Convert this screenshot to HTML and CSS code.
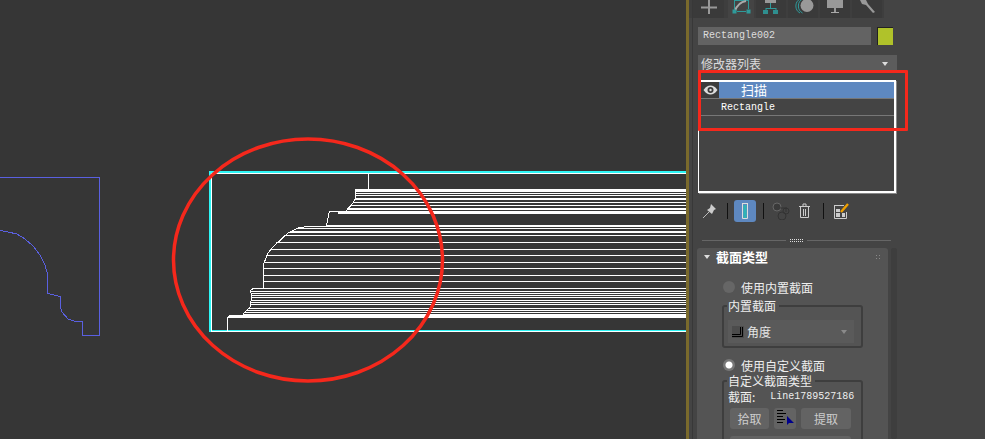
FILE: index.html
```html
<!DOCTYPE html>
<html lang="zh-CN">
<head>
  <meta charset="UTF-8">
  <title>扫描修改器</title>
  <link rel="stylesheet" href="styles.css">
</head>
<body>
  <div class="app">
    <div class="viewport">
      <svg class="scene" width="686" height="439" viewBox="0 0 686 439">
        <!-- profile shape -->
        <path class="profile" d="M0 177.5H99.5V335.5H82.5V321.5L77 322L68 319L62 312L60 305V296.5L52 294.5L47.5 293.5V274L45 265L40 255L33 246L25 239L17 234L8 232L0 230.5"/>
        <!-- sweep result -->
        <path class="cyan" d="M209 171.5H686M209 172.5H686M209.5 171V332M210.5 171V332M209 330.5H686"/>
        <path class="white" d="M211 173.5H686M211.5 173V332M211 331.5H686"/>
        <path class="white" d="M368.5 173V189
          M355 189.5H686M355 190.5H686M355 191.5H686M355 193.5H686M355 195.5H686M355 198.5H686M355 199.5H686
          M353 202.5H686M351 205.5H686M348 208.5H686M348 209.5H686
          M329 211.5H686M338 212.5H686M338 213.5H686
          M355.5 189V198L353 203L346 211M329.5 211L326.5 225
          M326 225.5H686M310 226.5H686M298 228.5H686M290 231.5H686M289 232.5H686M284 235.5H686
          M276 242.5H686M271 249.5H686M267 255.5H686M264 262.5H686M263 268.5H686M263 275.5H686M263 281.5H686
          M253 288.5H686M250 291.5H686M251 293.5H686M251 295.5H686M252 297.5H686M251 300.5H686M251 302.5H686M250 304.5H686
          M249 308.5H686M247 310.5H686M245 312.5H686M243 314.5H686M229 315.5H686M228 316.5H686M228 317.5H686
          M310 226L298 228L288 233L273 247L268 253L264 263L263.5 268V288.5
          M253 288.5L250 291L252 295L250 307L243 314
          M227.5 317V331"/>
        <ellipse class="mark" cx="308" cy="260" rx="134.5" ry="121"/>
      </svg>
    </div>

    <div class="panel">
      <div class="tabs">
        <div class="tab">
          <svg width="18" height="14" viewBox="0 0 18 14"><path class="gr" d="M1 7.5H17M9 0V14"/></svg>
        </div>
        <div class="tab tab-on">
          <svg width="20" height="15" viewBox="0 0 20 15">
            <path class="te" d="M3.5 0V9M3.5 .5H18M17.5 .5V9"/>
            <path class="gr2" d="M4 11C6 5 9 2 15 1"/>
            <path class="te" d="M6 11.5H15"/>
            <rect class="ts" x="1.5" y="9.5" width="4" height="4"/><rect class="ts" x="15.5" y="9.5" width="4" height="4"/>
          </svg>
        </div>
        <div class="tab">
          <svg width="16" height="15" viewBox="0 0 16 15">
            <rect x="2" y="0" width="11" height="3" fill="#999"/>
            <path class="te" d="M7.5 3V8M3 8.5H13M3 8V11M13 8V11"/>
            <rect x="0" y="10" width="5" height="4" fill="#2f8f8f"/><rect x="10" y="10" width="5" height="4" fill="#2f8f8f"/>
          </svg>
        </div>
        <div class="tab tab-motion">
          <svg width="20" height="14" viewBox="0 0 20 14">
            <path class="te" d="M5 -1A8 8 0 0 0 5 13M7.5 -1A8 8 0 0 0 7.5 13"/>
            <circle cx="12" cy="5.5" r="6.5" fill="#999"/>
          </svg>
        </div>
        <div class="tab">
          <svg width="16" height="15" viewBox="0 0 16 15">
            <rect x="0" y="0" width="16" height="8" fill="#999"/>
            <rect x="7" y="8" width="2" height="4" fill="#999"/><rect x="4" y="12" width="8" height="1" fill="#aaa"/>
          </svg>
        </div>
        <div class="tab">
          <svg width="17" height="15" viewBox="0 0 17 15">
            <path d="M4 0L1 0L3 4L7 5L14 13L16 12L9 4L7 0Z" fill="#999"/>
          </svg>
        </div>
      </div>

      <div class="name-row">
        <div class="name-field">Rectangle002</div>
        <div class="swatch"></div>
      </div>

      <div class="mod-select">
        <span>修改器列表</span>
        <i class="caret caret-light"></i>
      </div>

      <div class="stack">
        <div class="stack-row row-sel">
          <div class="eye">
            <svg width="15" height="10" viewBox="0 0 15 10">
              <path d="M.5 5C3 1.5 5 .5 7.5 .5S12 1.5 14.5 5C12 8.5 10 9.5 7.5 9.5S3 8.5 .5 5Z" fill="#ddd"/>
              <circle cx="7.5" cy="5" r="3" fill="#3a3a3a"/>
              <circle cx="7.5" cy="5" r="1.2" fill="#ddd"/>
            </svg>
          </div>
          <span class="sel-text">扫描</span>
        </div>
        <div class="stack-row row-base">Rectangle</div>
      </div>

      <div class="tools">
        <svg class="tool" width="16" height="18" viewBox="0 0 16 18">
          <path d="M1 16L7 10" stroke="#bbb" fill="none"/>
          <path d="M9 2L14 7L12 8L10 12L5 8L8 6Z" fill="#ccc"/>
        </svg>
        <span class="tsep"></span>
        <div class="tool-on">
          <svg width="8" height="16" viewBox="0 0 8 16">
            <path d="M1 .5H7M1.5 1V15.5H6.5V1" fill="none" stroke="#ddd"/>
            <rect x="2.5" y="2" width="3" height="13" fill="#2fb5b5"/>
          </svg>
        </div>
        <span class="tsep"></span>
        <svg class="tool" width="18" height="18" viewBox="0 0 18 18">
          <circle cx="5" cy="5" r="4" fill="#3a3a3a" stroke="#666"/>
          <circle cx="10" cy="14" r="4" fill="none" stroke="#333"/>
          <circle cx="14" cy="9" r="3" fill="none" stroke="#333"/>
          <path d="M8 6H15M14 6V10" stroke="#333" fill="none"/>
        </svg>
        <svg class="tool" width="12" height="16" viewBox="0 0 12 16">
          <path d="M0 3.5H11M4 3V1H7V3M1.5 4V14.5H9.5V4M4.5 6V13M6.5 6V13" fill="none" stroke="#ccc"/>
        </svg>
        <span class="tsep"></span>
        <svg class="tool" width="16" height="16" viewBox="0 0 16 16">
          <path d="M.5 2.5H10M.5 2V15.5H12.5V9" fill="none" stroke="#ccc"/>
          <path d="M2 6H6V9H2ZM8 10H11V14H8ZM2 10H6V14H2Z" fill="#ccc"/>
          <path d="M7 9L14 1" stroke="#f0a000" stroke-width="2.4"/>
        </svg>
      </div>

      <div class="splitter"><span></span><b></b><span></span></div>

      <div class="rollout-wrap">
        <div class="rollout">
          <div class="roll-head">
            <i class="caret caret-light"></i>
            <span>截面类型</span>
            <em class="grip"></em>
          </div>

          <div class="radio-row"><span class="radio"></span>使用内置截面</div>
          <fieldset class="group">
            <legend>内置截面</legend>
            <div class="combo">
              <span class="combo-ico"><svg width="12" height="12" viewBox="0 0 12 12"><path d="M0 10.5H10.5V1M0 8.5H8.5V1" fill="none" stroke="#000"/></svg></span>
              <span>角度</span>
              <i class="caret caret-dim"></i>
            </div>
          </fieldset>

          <div class="radio-row radio-row2"><span class="radio radio-on"></span>使用自定义截面</div>
          <fieldset class="group group2">
            <legend>自定义截面类型</legend>
            <div class="sect-line"><span>截面:</span><code>Line1789527186</code></div>
            <div class="btns">
              <div class="btn btn-a">拾取</div>
              <div class="btn btn-i">
                <svg width="20" height="15" viewBox="0 0 20 15">
                  <path d="M1 .5H7M1 3.5H10M1 6.5H7M1 9.5H9M1 12.5H7" stroke="#000" fill="none"/>
                  <path d="M11 6V15L13 13H18Z" fill="#00008c"/>
                </svg>
              </div>
              <div class="btn btn-b">提取</div>
            </div>
            <div class="btn btn-wide"></div>
          </fieldset>
        </div>
        <div class="scroll"></div>
      </div>

      <div class="red-box"></div>
    </div>
  </div>
</body>
</html>
```

FILE: styles.css
```css
html, body { margin:0; height:439px; overflow:hidden; background:#444; }
body { font-family:"Noto Sans CJK SC", "Liberation Sans", sans-serif; font-size:12px; color:#e4e4e4; }
.app { display:flex; height:439px; }

.viewport { width:686px; flex:none; background:#363636; }
.scene { display:block; }
.scene path { fill:none; stroke-width:1; shape-rendering:crispEdges; }
.profile { stroke:#5a60e0; }
.cyan { stroke:#2cf5f5; }
.white { stroke:#fff; }
.scene .mark { fill:none; stroke:#f5281c; stroke-width:3.5; }

.panel { position:relative; flex:1; border-left:3px solid #7a6a2c; background:#444; height:439px; }
.panel::before { content:""; position:absolute; left:3px; top:0; bottom:0; width:1px; background:#383838; }

.tabs { display:flex; height:18px; padding-left:4px; background:#3e3e3e; width:191px; }
.tab { height:18px; margin-right:2px; background:#3a3a3a; display:flex; justify-content:center; overflow:hidden; width:30px; }
.tab:first-child { width:31px; margin-right:4px; }
.tab-on { background:#444; width:26px; }
.tab-motion svg { margin-left:4px; }
.tab svg { display:block; }
.gr { stroke:#999; stroke-width:2; fill:none; }
.gr2 { stroke:#aaa; stroke-width:2; fill:none; }
.te { stroke:#2f9a9a; fill:none; }
.ts { fill:#2f9a9a; }

.name-row { display:flex; gap:6px; margin:9px 0 0 9px; }
.name-field { width:168px; height:18px; padding-left:5px; background:#636363; color:#ddd; font:10px/17px "Liberation Mono", monospace; }
.swatch { width:15px; height:17px; background:#b0c22a; border-top:1px solid #222; border-left:1px solid #222; }

.mod-select { display:flex; justify-content:space-between; align-items:center; width:187px; height:17px; margin:10px 0 0 9px; padding:0 9px 0 3px; background:#5c5c5c; color:#ddd; line-height:17px; }
.caret { display:block; width:0; height:0; border-left:3px solid transparent; border-right:3px solid transparent; }
.caret-light { border-top:4px solid #ddd; }
.caret-dim { border-top:4px solid #8a8a8a; margin-left:auto; margin-right:7px; }

.stack { width:193px; height:109px; margin:8px 0 0 9px; border:solid #fff; border-width:2px 2px 2px 1px; padding-left:2px; box-shadow:1px 1px 0 #888; }
.stack-row { height:16px; display:flex; border-bottom:1px solid #777; }
.row-sel { background:#5e88c0; }
.eye { width:18px; height:16px; background:#3c3c3c; display:flex; align-items:center; justify-content:center; }
.sel-text { margin-left:22px; color:#fff; font-size:13px; line-height:16px; }
.row-base { padding-left:20px; color:#fff; font:10px/17px "Liberation Mono", monospace; }

.tools { display:flex; align-items:center; height:22px; margin:7px 0 0 13px; }
.tool { display:block; flex:none; }
.tsep { display:block; width:1px; height:16px; background:#111; flex:none; }
.tool:nth-child(1) { margin-right:9px; }
.tools .tsep:nth-child(2) { margin-right:6px; }
.tool-on { width:22px; height:22px; background:#5e88c0; border-radius:3px; display:flex; align-items:center; justify-content:center; margin-right:7px; flex:none; }
.tools .tsep:nth-child(4) { margin-right:8px; }
.tools .tool:nth-child(5) { margin-right:9px; }
.tools .tool:nth-child(6) { margin-right:12px; }
.tools .tsep:nth-child(7) { margin-right:10px; }

.splitter { display:flex; align-items:center; gap:4px; margin:17px 0 0 13px; width:189px; height:3px; }
.splitter span { flex:1; height:1px; background:#666; }
.splitter b { width:13px; height:3px; border-top:1px dotted #ddd; border-bottom:1px dotted #ddd; box-sizing:border-box; }

.rollout-wrap { display:flex; gap:3px; margin:6px 0 0 8px; }
.rollout { width:191px; height:191px; background:#545454; border-radius:3px 3px 0 0; overflow:hidden; }
.scroll { width:6px; height:191px; background:#3e3e3e; border-radius:2px; }

.roll-head { display:flex; align-items:center; height:17px; padding:0 0 0 7px; color:#fff; font-weight:bold; font-size:13px; }
.roll-head span { margin-left:6px; }
.grip { display:block; width:6px; height:6px; margin-left:auto; margin-right:7px; background:radial-gradient(#888 1px, transparent 1px) 0 0/3px 3px; }

.radio-row { display:flex; align-items:center; height:18px; margin:13px 0 0 26px; color:#eee; }
.radio { width:12px; height:12px; border-radius:50%; background:#666; margin-right:6px; flex:none; }
.radio-on { background:radial-gradient(circle, #fff 0 3px, #777 4px 6px); }
.radio-row2 { margin-top:8px; }

.group { margin:3px 0 0 25px; padding:0 4px; width:141px; height:49px; border:2px solid #3e3e3e; border-radius:3px; box-sizing:border-box; min-width:0; }
.group legend { padding:0 3px 0 1px; margin-left:-1px; line-height:14px; color:#eee; }
.group2 { height:80px; margin-top:0; }

.combo { display:flex; align-items:center; gap:3px; height:23px; margin-top:7px; width:126px; padding-left:4px; box-sizing:border-box; background:#5a5a5a; }
.combo-ico { display:block; height:12px; background:#4c4c4c; }
.combo-ico svg { display:block; }

.sect-line { display:flex; height:15px; align-items:center; margin-top:1px; color:#eee; white-space:nowrap; }
.sect-line span { flex:none; }
.sect-line code { margin-left:15px; font:10px "Liberation Mono", monospace; color:#eee; }
.btns { display:flex; margin:4px 0 0 2px; }
.btn { height:21px; background:#636363; border-radius:3px; color:#ccc; text-align:center; line-height:21px; box-sizing:border-box; }
.btn-a { width:39px; margin-right:5px; }
.btn-i { width:22px; margin-right:5px; padding:2px 0 0 2px; }
.btn-i svg { display:block; }
.btn-b { width:50px; }
.btn-wide { width:121px; margin:7px 0 0 2px; }

.red-box { position:absolute; left:9px; top:70px; width:204px; height:55px; border:3px solid #f5281c; border-radius:1px; }
```
